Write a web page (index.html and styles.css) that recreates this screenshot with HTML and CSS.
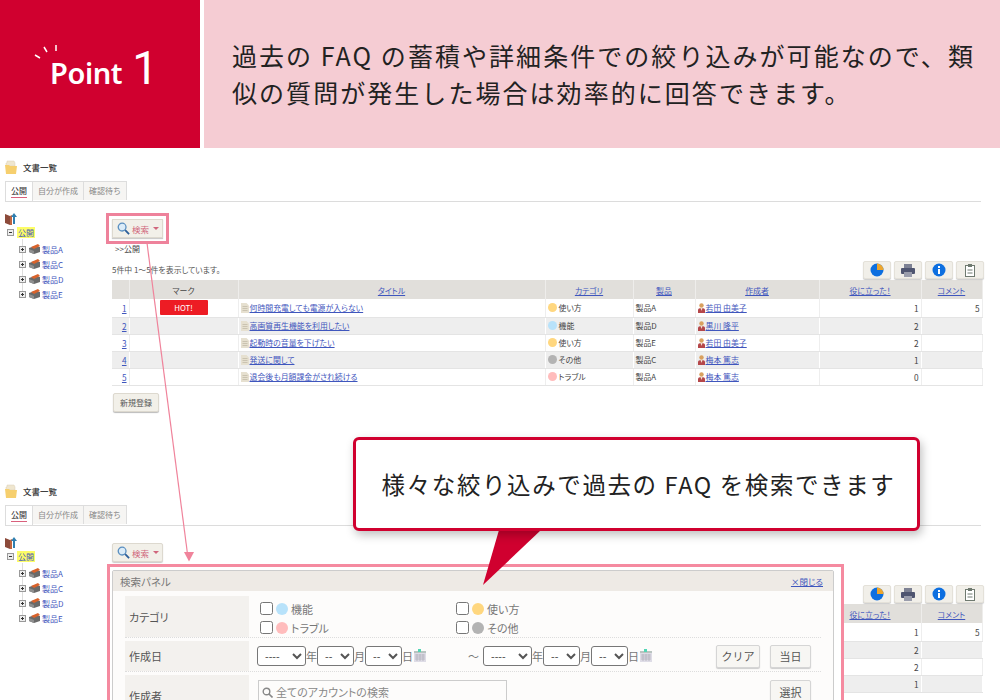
FILE: index.html
```html
<!DOCTYPE html>
<html lang="ja">
<head>
    <meta charset="UTF-8">
    <meta name="viewport" content="width=device-width, initial-scale=1.0">
    <title>Point 1</title>
    <link rel="stylesheet" href="styles.css">
</head>
<body>

<svg class="icon-defs" width="0" height="0">
    <symbol id="i-folder" viewBox="0 0 12 14">
        <path d="M1 3h1V1h7l1 2v3H1z" fill="#efe6cf" stroke="#d9cfb5" stroke-width=".5"/>
        <path d="M0 5h4l1 1h7l-1 8H1z" fill="#f6cf6e"/>
    </symbol>
    <symbol id="i-books" viewBox="0 0 12 12">
        <path d="M0 1l5 2v9L0 10z" fill="#8c4a3a"/>
        <path d="M5 3l2-1v10l-2 0z" fill="#c0653f"/>
        <path d="M9 0l3 4h-2v7H8V4H6z" fill="#2f7fb0"/>
    </symbol>
    <symbol id="i-box" viewBox="0 0 11 10">
        <path d="M0 4l6-2 5 1v5l-6 2-5-2z" fill="#6a6a6a"/>
        <path d="M0 5l5 2v3L0 8z" fill="#8f8f8f"/>
        <path d="M2 3l7-3 2 2-6 3z" fill="#d9622b"/>
    </symbol>
    <symbol id="i-doc" viewBox="0 0 8 10">
        <path d="M0 0h5.500L8 2.500V10H0z" fill="#e6e0d0"/>
        <path d="M1.500 3.500h5M1.500 5.500h5M1.500 7.500h5" stroke="#bdb6a3" stroke-width=".7"/>
    </symbol>
    <symbol id="i-person" viewBox="0 0 7 10">
        <circle cx="3.500" cy="2.500" r="2.200" fill="#d9a05f"/>
        <path d="M0 10V7q0-2 3.500-2T7 7v3z" fill="#b5474a"/>
        <path d="M2.500 5h2l-1 3z" fill="#f1e3d3"/>
    </symbol>
    <symbol id="i-glass" viewBox="0 0 14 14">
        <circle cx="5.500" cy="5.500" r="4.200" fill="#dcecf8" stroke="#5a8fc0" stroke-width="1.400"/>
        <path d="M8.800 8.800l4.200 4.200" stroke="#2d5f9a" stroke-width="2"/>
    </symbol>
    <symbol id="i-calendar" viewBox="0 0 14 14">
        <rect x="1" y="2" width="12" height="11" fill="#dedce6"/>
        <rect x="1" y="2" width="12" height="2" fill="#b9c4c0"/>
        <rect x="5" y="0" width="3" height="3" fill="#53d6b5"/>
        <path d="M2 6h10M2 8h10M2 10h10M4 5v7M7 5v7M10 5v7" stroke="#a9a7b3" stroke-width=".6"/>
    </symbol>
</svg>

<div class="page">

    <header class="hero">
        <div class="hero-badge">
            <svg class="sparks" width="26" height="18" viewBox="0 0 26 18">
                <path d="M1 12l5 3M10 4l3 5M22 2v6" stroke="#fff" stroke-width="1.500"/>
            </svg>
            <span class="hero-point">Point</span>
            <span class="hero-num">1</span>
        </div>
        <p class="hero-text">過去の FAQ の蓄積や詳細条件での絞り込みが可能なので、類<br>似の質問が発生した場合は効率的に回答できます。</p>
    </header>

    <section class="screen">
        <h2 class="screen-title"><svg width="12" height="14"><use href="#i-folder"/></svg>文書一覧</h2>
        <div class="tabs">
            <span class="tab tab-active"><b>公開</b></span>
            <span class="tab">自分が作成</span>
            <span class="tab">確認待ち</span>
        </div>
        <div class="screen-body">
            <ul class="tree">
                <li class="tree-root"><svg width="12" height="12"><use href="#i-books"/></svg></li>
                <li class="tree-top"><i class="toggle"></i><mark>公開</mark></li>
                <li class="tree-item"><i class="toggle toggle-closed"></i><svg width="11" height="10"><use href="#i-box"/></svg><a>製品A</a></li>
                <li class="tree-item"><i class="toggle toggle-closed"></i><svg width="11" height="10"><use href="#i-box"/></svg><a>製品C</a></li>
                <li class="tree-item"><i class="toggle toggle-closed"></i><svg width="11" height="10"><use href="#i-box"/></svg><a>製品D</a></li>
                <li class="tree-item"><i class="toggle toggle-closed"></i><svg width="11" height="10"><use href="#i-box"/></svg><a>製品E</a></li>
            </ul>
            <div class="list">
                <button class="search-btn is-marked"><svg width="13" height="13"><use href="#i-glass"/></svg>検索<i class="caret"></i></button>
                <div class="crumb">&gt;&gt;公開</div>
                <div class="list-head">
                    <span class="count">5件中 1～5件を表示しています。</span>
                    <div class="tools">
                        <span class="tool"><svg width="14" height="14" viewBox="0 0 14 14"><circle cx="7" cy="7" r="6.500" fill="#0d6fe0"/><path d="M7 7V.5A6.500 6.500 0 0 1 13.500 7z" fill="#eda62e"/></svg></span>
                        <span class="tool"><svg width="14" height="13" viewBox="0 0 14 13"><path d="M3 0h8v4H3z" fill="#7d8193"/><rect y="4" width="14" height="6" rx="1" fill="#4f5570"/><path d="M3 8h8v5H3z" fill="#9a9dac"/></svg></span>
                        <span class="tool"><svg width="14" height="14" viewBox="0 0 14 14"><circle cx="7" cy="7" r="6.500" fill="#0d6fe0"/><path d="M6 3h2v2H6zM6 6h2v5H6z" fill="#fff"/></svg></span>
                        <span class="tool"><svg width="10" height="13" viewBox="0 0 10 13"><rect x=".5" y="1.500" width="9" height="11" fill="#fff" stroke="#6f7a70"/><path d="M3 0h4v3H3z" fill="#6f7a70"/><path d="M2.500 6h5M2.500 9h5" stroke="#6f7a70"/></svg></span>
                    </div>
                </div>
                <table class="doc-table">
                    <colgroup><col class="c-no"><col class="c-mark"><col class="c-title"><col class="c-cat"><col class="c-prod"><col class="c-user"><col class="c-help"><col class="c-comm"></colgroup>
                    <tr><th></th><th>マーク</th><th><a>タイトル</a></th><th><a>カテゴリ</a></th><th><a>製品</a></th><th><a>作成者</a></th><th><a>役に立った！</a></th><th><a>コメント</a></th></tr>
                    <tr class="first"><td class="no"><a>1</a></td><td class="mark-cell"><span class="hot">HOT!</span></td><td><svg width="8" height="10"><use href="#i-doc"/></svg><a>何時間充電しても電源が入らない</a></td><td><i class="dot dot-use"></i>使い方</td><td>製品A</td><td><svg width="7" height="10"><use href="#i-person"/></svg><a>若田 由美子</a></td><td class="num">1</td><td class="num">5</td></tr>
                    <tr><td class="no"><a>2</a></td><td></td><td><svg width="8" height="10"><use href="#i-doc"/></svg><a>高画質再生機能を利用したい</a></td><td><i class="dot dot-func"></i>機能</td><td>製品D</td><td><svg width="7" height="10"><use href="#i-person"/></svg><a>黒川 隆平</a></td><td class="num">2</td><td></td></tr>
                    <tr><td class="no"><a>3</a></td><td></td><td><svg width="8" height="10"><use href="#i-doc"/></svg><a>起動時の音量を下げたい</a></td><td><i class="dot dot-use"></i>使い方</td><td>製品E</td><td><svg width="7" height="10"><use href="#i-person"/></svg><a>若田 由美子</a></td><td class="num">2</td><td></td></tr>
                    <tr><td class="no"><a>4</a></td><td></td><td><svg width="8" height="10"><use href="#i-doc"/></svg><a>発送に関して</a></td><td><i class="dot dot-other"></i>その他</td><td>製品C</td><td><svg width="7" height="10"><use href="#i-person"/></svg><a>梅本 篤志</a></td><td class="num">1</td><td></td></tr>
                    <tr><td class="no"><a>5</a></td><td></td><td><svg width="8" height="10"><use href="#i-doc"/></svg><a>退会後も月額課金がされ続ける</a></td><td><i class="dot dot-trouble"></i>トラブル</td><td>製品A</td><td><svg width="7" height="10"><use href="#i-person"/></svg><a>梅本 篤志</a></td><td class="num">0</td><td></td></tr>
                </table>
                <button class="new-btn">新規登録</button>
            </div>
        </div>
    </section>

    <section class="screen screen-open">
        <h2 class="screen-title"><svg width="12" height="14"><use href="#i-folder"/></svg>文書一覧</h2>
        <div class="tabs">
            <span class="tab tab-active"><b>公開</b></span>
            <span class="tab">自分が作成</span>
            <span class="tab">確認待ち</span>
        </div>
        <div class="screen-body">
            <ul class="tree">
                <li class="tree-root"><svg width="12" height="12"><use href="#i-books"/></svg></li>
                <li class="tree-top"><i class="toggle"></i><mark>公開</mark></li>
                <li class="tree-item"><i class="toggle toggle-closed"></i><svg width="11" height="10"><use href="#i-box"/></svg><a>製品A</a></li>
                <li class="tree-item"><i class="toggle toggle-closed"></i><svg width="11" height="10"><use href="#i-box"/></svg><a>製品C</a></li>
                <li class="tree-item"><i class="toggle toggle-closed"></i><svg width="11" height="10"><use href="#i-box"/></svg><a>製品D</a></li>
                <li class="tree-item"><i class="toggle toggle-closed"></i><svg width="11" height="10"><use href="#i-box"/></svg><a>製品E</a></li>
            </ul>
            <div class="list">
                <button class="search-btn"><svg width="13" height="13"><use href="#i-glass"/></svg>検索<i class="caret"></i></button>
                <div class="crumb"></div>
                <div class="list-head">
                    <span class="count"></span>
                    <div class="tools">
                        <span class="tool"><svg width="14" height="14" viewBox="0 0 14 14"><circle cx="7" cy="7" r="6.500" fill="#0d6fe0"/><path d="M7 7V.5A6.500 6.500 0 0 1 13.500 7z" fill="#eda62e"/></svg></span>
                        <span class="tool"><svg width="14" height="13" viewBox="0 0 14 13"><path d="M3 0h8v4H3z" fill="#7d8193"/><rect y="4" width="14" height="6" rx="1" fill="#4f5570"/><path d="M3 8h8v5H3z" fill="#9a9dac"/></svg></span>
                        <span class="tool"><svg width="14" height="14" viewBox="0 0 14 14"><circle cx="7" cy="7" r="6.500" fill="#0d6fe0"/><path d="M6 3h2v2H6zM6 6h2v5H6z" fill="#fff"/></svg></span>
                        <span class="tool"><svg width="10" height="13" viewBox="0 0 10 13"><rect x=".5" y="1.500" width="9" height="11" fill="#fff" stroke="#6f7a70"/><path d="M3 0h4v3H3z" fill="#6f7a70"/><path d="M2.500 6h5M2.500 9h5" stroke="#6f7a70"/></svg></span>
                    </div>
                </div>
                <table class="doc-table">
                    <colgroup><col class="c-no"><col class="c-mark"><col class="c-title"><col class="c-cat"><col class="c-prod"><col class="c-user"><col class="c-help"><col class="c-comm"></colgroup>
                    <tr><th></th><th></th><th></th><th></th><th></th><th></th><th><a>役に立った！</a></th><th><a>コメント</a></th></tr>
                    <tr class="first"><td></td><td></td><td></td><td></td><td></td><td></td><td class="num">1</td><td class="num">5</td></tr>
                    <tr><td></td><td></td><td></td><td></td><td></td><td></td><td class="num">2</td><td></td></tr>
                    <tr><td></td><td></td><td></td><td></td><td></td><td></td><td class="num">2</td><td></td></tr>
                    <tr><td></td><td></td><td></td><td></td><td></td><td></td><td class="num">1</td><td></td></tr>
                </table>
            </div>
        </div>

        <!-- search panel opens over the list -->
        <div class="panel-frame">
            <div class="panel">
                <div class="panel-head"><span>検索パネル</span><a>×閉じる</a></div>
                <div class="panel-row row-cat">
                    <div class="panel-label">カテゴリ</div>
                    <div class="cat-grid">
                        <label><input type="checkbox"><i class="dot dot-func"></i>機能</label>
                        <label><input type="checkbox"><i class="dot dot-use"></i>使い方</label>
                        <label><input type="checkbox"><i class="dot dot-trouble"></i>トラブル</label>
                        <label><input type="checkbox"><i class="dot dot-other"></i>その他</label>
                    </div>
                </div>
                <div class="panel-row row-date">
                    <div class="panel-label">作成日</div>
                    <div class="date-line">
                        <select class="sel-year"><option>----</option></select>年<select class="sel-day"><option>--</option></select>月<select class="sel-day"><option>--</option></select>日<svg width="14" height="14"><use href="#i-calendar"/></svg>
                        <span class="tilde">～</span>
                        <select class="sel-year"><option>----</option></select>年<select class="sel-day"><option>--</option></select>月<select class="sel-day"><option>--</option></select>日<svg width="14" height="14"><use href="#i-calendar"/></svg>
                        <button class="panel-btn btn-clear">クリア</button>
                        <button class="panel-btn btn-today">当日</button>
                    </div>
                </div>
                <div class="panel-row row-user">
                    <div class="panel-label">作成者</div>
                    <div class="user-line">
                        <div class="user-input"><svg width="11" height="11" viewBox="0 0 11 11"><circle cx="4.500" cy="4.500" r="3.300" fill="none" stroke="#888" stroke-width="1.400"/><path d="M7 7l3.500 3.500" stroke="#888" stroke-width="1.600"/></svg>全てのアカウントの検索</div>
                        <button class="panel-btn btn-pick">選択</button>
                    </div>
                </div>
            </div>
        </div>
    </section>

    <svg class="overlay" width="1000" height="700" viewBox="0 0 1000 700">
        <path d="M147 243L187.500 554" stroke="#f0839b" stroke-width="1.200" fill="none"/>
        <path d="M184 552h10l-5 9.500z" fill="#f0839b"/>
        <path d="M499 530h42l-58 55z" fill="#d0002f"/>
    </svg>

    <div class="callout">様々な絞り込みで過去の FAQ を検索できます</div>

</div>

</body>
</html>
```

FILE: styles.css
```css
* {
    box-sizing: border-box;
}
body {
    margin: 0;
    background-color: #fff;
    font-family: "Noto Sans CJK JP", "Noto Sans", sans-serif;
    color: #444;
}
a {
    color: #3f56bd;
}
svg {
    flex: none;
}
ul {
    list-style: none;
    margin: 0;
    padding: 0;
}
.icon-defs {
    position: absolute;
}
.page {
    position: relative;
    width: 1000px;
    height: 700px;
    overflow: hidden;
}

/* top banner */
.hero {
    display: flex;
    gap: 4px;
    height: 148px;
}
.hero-badge {
    position: relative;
    width: 200px;
    background-color: #d0002f;
    color: #fff;
    display: flex;
    align-items: flex-end;
    padding: 0 0 58px 50px;
}
.sparks {
    position: absolute;
    left: 34px;
    top: 43px;
}
.hero-point {
    font-family: "Noto Sans", sans-serif;
    font-size: 29px;
    font-weight: 600;
    line-height: 34px;
    letter-spacing: -.4px;
}
.hero-num {
    font-family: Roboto, sans-serif;
    font-size: 46px;
    font-weight: 400;
    line-height: 44px;
    margin-left: 10px;
}
.hero-text {
    flex: 1;
    margin: 0;
    padding: 37px 0 0 28px;
    background-color: #f5ccd3;
    color: #222;
    font-size: 25px;
    line-height: 37px;
    letter-spacing: 2.05px;
    white-space: nowrap;
}

/* document list screens */
.screen {
    position: relative;
    height: 324px;
    padding: 12px 16px 0 5px;
    font-feature-settings: "palt";
}
.screen-title {
    display: flex;
    align-items: center;
    gap: 6px;
    margin: 0;
    height: 14px;
    font-size: 8.500px;
    font-weight: 500;
    color: #333;
}
.tabs {
    display: flex;
    margin-top: 7px;
    height: 21px;
    border-bottom: 1px solid #dcdcdc;
    margin-right: 3px;
}
.tab {
    height: 19px;
    padding: 0 5px;
    border: 1px solid #ddd;
    border-left: none;
    border-bottom: none;
    background-color: #f6f5f3;
    color: #888;
    font-size: 8px;
    line-height: 18px;
    font-feature-settings: normal;
}
.tab-active {
    height: 20px;
    padding: 0 5px;
    border-left: 1px solid #ddd;
    background-color: #fff;
    color: #444;
}
.tab-active b {
    display: inline-block;
    height: 16px;
    font-weight: 500;
    border-bottom: 1.500px solid #d9607c;
}
.screen-body {
    display: flex;
    padding-top: 11px;
}

/* tree */
.tree {
    position: relative;
    width: 107px;
    font-size: 8px;
}
.tree::before {
    content: "";
    position: absolute;
    left: 17px;
    top: 26px;
    width: 1px;
    height: 56px;
    background-color: #ddd;
}
.tree a {
    color: #3f56bd;
}
.tree li {
    position: relative;
    display: flex;
    align-items: center;
    height: 15px;
}
.tree li.tree-root {
    height: 12px;
}
.tree li.tree-top {
    padding-left: 2px;
    gap: 3px;
    margin-bottom: 1.500px;
}
.tree-top mark {
    background-color: #fdfd66;
    color: #3f56bd;
    padding: 0 1px;
    line-height: 11px;
}
.tree-item {
    padding-left: 14px;
    gap: 2.500px;
}
.toggle {
    display: inline-block;
    flex: none;
    width: 7px;
    height: 7px;
    border: 1px solid #999;
    background: linear-gradient(#333, #333) center / 3px 1px no-repeat #eee;
}
.toggle-closed {
    background: linear-gradient(#333, #333) center / 3px 1px no-repeat,
                linear-gradient(#333, #333) center / 1px 3px no-repeat #eee;
}

/* list column */
.list {
    width: 870px;
}
.search-btn {
    display: flex;
    align-items: center;
    gap: 2px;
    width: 51px;
    height: 19px;
    margin-top: 6px;
    padding: 0 4px;
    border: 1px solid #ddd9cf;
    border-radius: 2px;
    background-color: #f2f0e9;
    color: #d0667c;
    font-family: inherit;
    font-size: 8.500px;
    white-space: nowrap;
    box-shadow: 0 1px 1px #ccc;
}
.search-btn.is-marked {
    border-radius: 0;
    outline: 3.500px solid #ee829b;
    outline-offset: 3px;
}
.caret {
    flex: none;
    width: 0;
    height: 0;
    margin-left: 2px;
    border: 3px solid transparent;
    border-top: 3px solid #d0667c;
    border-bottom: none;
}
.crumb {
    margin: 4px 0 0 3px;
    height: 14px;
    font-size: 8px;
    line-height: 14px;
    color: #444;
}
.list-head {
    display: flex;
    justify-content: space-between;
    align-items: flex-start;
    margin-top: 5px;
    height: 17px;
    width: 872px;
    font-size: 7.900px;
    line-height: 17px;
    color: #555;
}
.tools {
    display: flex;
    gap: 3px;
}
.tool {
    display: flex;
    align-items: center;
    justify-content: center;
    width: 28px;
    height: 18px;
    background-color: #f1efe9;
    border: 1px solid #e4e1d9;
    border-radius: 2px;
    box-shadow: 0 1px 1px #ccc;
}
.doc-table {
    width: 870px;
    margin-top: 2px;
    table-layout: fixed;
    border-collapse: collapse;
    font-size: 7.900px;
}
.c-no { width: 17px; }
.c-mark { width: 109px; }
.c-title { width: 307px; }
.c-cat { width: 88px; }
.c-prod { width: 62px; }
.c-user { width: 124px; }
.c-help { width: 102px; }
.c-comm { width: 61px; }
.doc-table th {
    height: 19px;
    padding: 1px 0 0;
    background-color: #e1dfdb;
    border-right: 1px solid #eeedeb;
    font-weight: 400;
    color: #444;
}
.doc-table th a {
    text-decoration: underline;
}
.doc-table td {
    height: 17px;
    padding: 0 0 0 2px;
    border-right: 1px solid #eee;
    border-bottom: 1px solid #e4e4e4;
    white-space: nowrap;
}
.doc-table tr.first td {
    height: 18px;
}
.doc-table tr:nth-child(odd) td {
    background-color: #eee;
    border-right-color: #fff;
}
.doc-table td a {
    text-decoration: underline;
}
.doc-table td svg {
    vertical-align: -2px;
    margin-right: 1px;
}
.doc-table .no {
    text-align: center;
    padding-left: 8px;
    font-size: 8.300px;
}
.doc-table .mark-cell {
    text-align: center;
    padding: 0;
}
.hot {
    display: block;
    width: 48px;
    height: 15px;
    margin: 0 auto;
    background-color: #ed1c24;
    border-radius: 1px;
    color: #fff;
    line-height: 15px;
}
.doc-table .num {
    text-align: right;
    padding-right: 2px;
    font-size: 8.300px;
}
.dot {
    display: inline-block;
    width: 9px;
    height: 9px;
    border-radius: 50%;
    margin-right: 2px;
    vertical-align: -1px;
}
.dot-use { background-color: #ffd77f; }
.dot-func { background-color: #b8e2fa; }
.dot-other { background-color: #b3b3b3; }
.dot-trouble { background-color: #ffbcbc; }
.new-btn {
    display: block;
    width: 46px;
    height: 19px;
    margin: 7px 0 0 1px;
    padding: 0;
    border: 1px solid #ddd9cf;
    border-radius: 2px;
    background-color: #f2f0e9;
    font-family: inherit;
    font-size: 8px;
    color: #555;
    box-shadow: 0 1px 1px #bbb;
}

/* search panel */
.panel-frame {
    position: absolute;
    left: 107px;
    top: 92px;
    width: 737px;
    height: 200px;
    padding: 3px 7px 0 2px;
    background-color: #fff;
    border: 3.500px solid #f58aa0;
}
.panel {
    height: 200px;
    border: 1.500px solid #ccc;
    border-radius: 2px;
    background-color: #fdfcfb;
    padding: 0 12px;
}
.panel-head {
    display: flex;
    justify-content: space-between;
    align-items: center;
    height: 20px;
    margin: 0 -12px 5px;
    padding: 0 10px 0 7px;
    background-color: #eeeae5;
    font-size: 10.500px;
    color: #777;
}
.panel-head a {
    font-size: 8.500px;
    text-decoration: underline;
}
.panel-row {
    display: flex;
    margin-bottom: 3px;
    border-bottom: 1px dotted #ddd;
    font-size: 11px;
    color: #777;
}
.panel-label {
    width: 124px;
    flex: none;
    padding-left: 4px;
    display: flex;
    align-items: center;
    background-color: #f3f1ee;
    color: #555;
}
.row-cat {
    height: 42px;
}
.row-date {
    height: 31px;
}
.row-user {
    height: 42px;
    border-bottom: none;
}
.cat-grid {
    display: grid;
    grid-template-columns: 196px 196px;
    align-items: center;
    padding: 3px 0 0 11px;
}
.cat-grid label {
    display: flex;
    align-items: center;
    height: 18px;
}
.cat-grid input {
    width: 13px;
    height: 13px;
    margin: 0 3px 0 0;
}
.cat-grid .dot {
    width: 12px;
    height: 12px;
    margin-right: 3px;
}
.date-line {
    display: flex;
    align-items: center;
    flex: 1;
    padding-left: 8px;
}
.date-line select {
    height: 20px;
    padding: 0 0 0 3px;
    border: 1px solid #777;
    border-radius: 3px;
    background-color: #fff;
    font-size: 11px;
    color: #555;
}
.sel-year {
    width: 49px;
}
.sel-day {
    width: 37px;
}
.tilde {
    margin: 0 4px 0 41px;
}
.panel-btn {
    height: 23px;
    padding: 0;
    border: 1px solid #d5d5d5;
    border-radius: 2px;
    background-color: #f7f6f3;
    font-family: inherit;
    font-size: 11px;
    color: #555;
    box-shadow: 0 1px 1px #ccc;
}
.btn-clear {
    width: 44px;
    margin-left: 63px;
}
.btn-today {
    width: 41px;
    margin-left: 10px;
}
.user-line {
    display: flex;
    flex: 1;
    padding: 5px 0 0 9px;
    align-items: flex-start;
}
.user-input {
    display: flex;
    align-items: center;
    gap: 3px;
    width: 249px;
    height: 24px;
    padding-left: 3px;
    border: 1px solid #ccc;
    color: #888;
}
.btn-pick {
    width: 41px;
    margin-left: 263px;
}

/* arrow and speech bubble over everything */
.overlay {
    position: absolute;
    left: 0;
    top: 0;
    pointer-events: none;
}
.callout {
    position: absolute;
    left: 353px;
    top: 437px;
    width: 567px;
    height: 94px;
    padding-left: 4px;
    border: 3px solid #d0002f;
    border-radius: 6px;
    background-color: #fff;
    box-shadow: 2px 4px 10px rgba(0, 0, 0, .25);
    color: #222;
    font-size: 23.500px;
    line-height: 88px;
    letter-spacing: 1.6px;
    text-align: center;
    white-space: nowrap;
}
```
